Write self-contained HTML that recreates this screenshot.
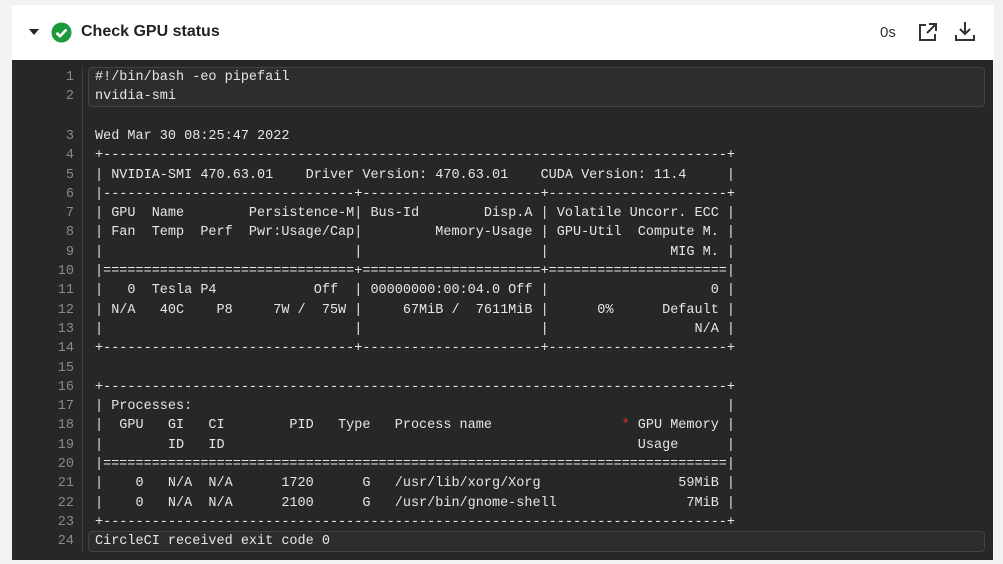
<!DOCTYPE html>
<html><head><meta charset="utf-8"><style>
html,body{margin:0;padding:0;}
body{width:1003px;height:564px;background:#f2f2f2;position:relative;overflow:hidden;font-family:"Liberation Sans",sans-serif;}
.hdr{position:absolute;left:12px;top:5px;width:982px;height:55px;background:#fff;}
.title{position:absolute;left:81px;top:23px;font-size:16px;font-weight:bold;color:#222;}
.dark{position:absolute;left:12px;top:60px;width:981px;height:500px;background:#272727;}
.gut{position:absolute;left:82px;top:66px;width:1px;height:486px;background:#3e3e3e;}
.box{position:absolute;left:88px;width:897px;background:#2d2d2d;border:1px solid #444;border-radius:4px;box-sizing:border-box;}
.ln,.code{position:absolute;font-family:"Liberation Mono",monospace;font-size:13.5px;line-height:19.29px;white-space:pre;margin:0;}
.ln{left:30px;width:44px;text-align:right;color:#8a8a8a;}
.code{left:95px;color:#e6e6e6;}
.r{color:#d33;}
</style></head><body>
<div class="hdr"></div>
<svg style="position:absolute;left:29px;top:29px" width="10" height="6"><path d="M0 0H10L5 6Z" fill="#222"/></svg>
<svg style="position:absolute;left:51px;top:22px" width="21" height="21" viewBox="0 0 21 21"><circle cx="10.5" cy="10.5" r="10" fill="#1a9a3a"/><path d="M5.5 10.8L9 14.2L15.5 7.5" stroke="#fff" stroke-width="2.6" fill="none"/></svg>
<div class="title">Check GPU status</div>
<div style="position:absolute;left:880px;top:24px;font-size:15px;color:#333">0s</div>
<svg style="position:absolute;left:918px;top:22px" width="20" height="20" viewBox="0 0 20 20" fill="none" stroke="#333" stroke-width="2"><path d="M8 3H2V18H17V12"/><path d="M11 2H18V9M18 2L9 11"/></svg>
<svg style="position:absolute;left:954px;top:20px" width="22" height="22" viewBox="0 0 22 22" fill="none" stroke="#333" stroke-width="2"><path d="M11 2V14M6 9L11 14L16 9"/><path d="M2 15V20H20V15"/></svg>
<div class="dark"></div>
<div class="gut"></div>
<div class="box" style="top:67px;height:40px"></div>
<div class="box" style="top:531px;height:21px"></div>
<pre class="ln" style="top:68px">1
2</pre>
<pre class="code" style="top:68px">#!/bin/bash -eo pipefail
nvidia-smi</pre>
<pre class="ln" style="top:127px">3
4
5
6
7
8
9
10
11
12
13
14
15
16
17
18
19
20
21
22
23
24</pre>
<pre class="code" style="top:127px">Wed Mar 30 08:25:47 2022
+-----------------------------------------------------------------------------+
| NVIDIA-SMI 470.63.01    Driver Version: 470.63.01    CUDA Version: 11.4     |
|-------------------------------+----------------------+----------------------+
| GPU  Name        Persistence-M| Bus-Id        Disp.A | Volatile Uncorr. ECC |
| Fan  Temp  Perf  Pwr:Usage/Cap|         Memory-Usage | GPU-Util  Compute M. |
|                               |                      |               MIG M. |
|===============================+======================+======================|
|   0  Tesla P4            Off  | 00000000:00:04.0 Off |                    0 |
| N/A   40C    P8     7W /  75W |     67MiB /  7611MiB |      0%      Default |
|                               |                      |                  N/A |
+-------------------------------+----------------------+----------------------+

+-----------------------------------------------------------------------------+
| Processes:                                                                  |
|  GPU   GI   CI        PID   Type   Process name                <span class="r">*</span> GPU Memory |
|        ID   ID                                                   Usage      |
|=============================================================================|
|    0   N/A  N/A      1720      G   /usr/lib/xorg/Xorg                 59MiB |
|    0   N/A  N/A      2100      G   /usr/bin/gnome-shell                7MiB |
+-----------------------------------------------------------------------------+
CircleCI received exit code 0</pre>
</body></html>
